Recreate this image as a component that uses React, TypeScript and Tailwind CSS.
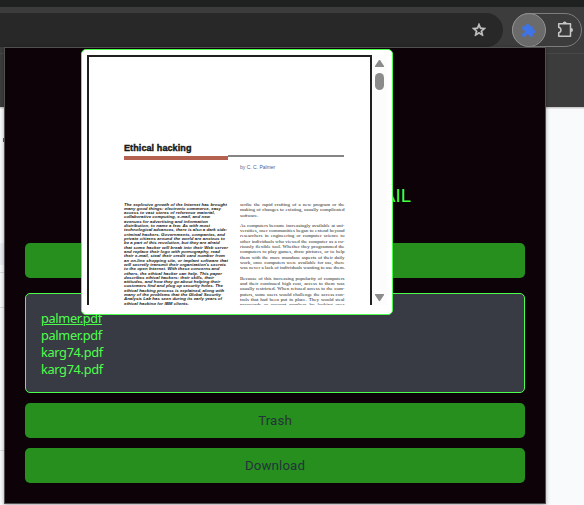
import React from "react";

const abstractLines: [string, number][] = [
  ["The explosive growth of the Internet has brought", 103],
  ["many good things: electronic commerce, easy", 97],
  ["access to vast stores of reference material,", 91],
  ["collaborative computing, e-mail, and new", 86],
  ["avenues for advertising and information", 84],
  ["distribution, to name a few. As with most", 86],
  ["technological advances, there is also a dark side:", 103],
  ["criminal hackers. Governments, companies, and", 101],
  ["private citizens around the world are anxious to", 101],
  ["be a part of this revolution, but they are afraid", 95],
  ["that some hacker will break into their Web server", 104],
  ["and replace their logo with pornography, read", 96],
  ["their e-mail, steal their credit card number from", 101],
  ["an on-line shopping site, or implant software that", 104],
  ["will secretly transmit their organization's secrets", 102],
  ["to the open Internet. With these concerns and", 94],
  ["others, the ethical hacker can help. This paper", 98],
  ["describes ethical hackers: their skills, their", 90],
  ["attitudes, and how they go about helping their", 95],
  ["customers find and plug up security holes. The", 99],
  ["ethical hacking process is explained, along with", 100],
  ["many of the problems that the Global Security", 97],
  ["Analysis Lab has seen during its early years of", 98],
  ["ethical hacking for IBM clients.", 65],
];

const bodyParagraphs: string[][] = [
  [
    "scribe the rapid crafting of a new program or the",
    "making of changes to existing, usually complicated",
    "software.",
  ],
  [
    "As computers became increasingly available at uni-",
    "versities, user communities began to extend beyond",
    "researchers in engineering or computer science to",
    "other individuals who viewed the computer as a cu-",
    "riously flexible tool. Whether they programmed the",
    "computers to play games, draw pictures, or to help",
    "them with the more mundane aspects of their daily",
    "work, once computers were available for use, there",
    "was never a lack of individuals wanting to use them.",
  ],
  [
    "Because of this increasing popularity of computers",
    "and their continued high cost, access to them was",
    "usually restricted. When refused access to the com-",
    "puters, some users would challenge the access con-",
    "trols that had been put in place. They would steal",
    "passwords or account numbers by looking over",
  ],
];

const files = ["palmer.pdf", "palmer.pdf", "karg74.pdf", "karg74.pdf"];

function Toolbar() {
  return (
    <header className="h-[107px] bg-[#3c3c3c]">
      <div className="h-[7px] bg-[#1f2120]" />
      <div className="flex h-[47px] items-start border-b border-[#484848] pt-[6px]">
        <div className="flex h-[34px] w-[503px] items-center justify-end rounded-r-full bg-[#282828] pr-4">
          <svg width="16" height="16" viewBox="0 0 24 24" fill="#c7c7c7">
            <path d="M22 9.24l-7.19-.62L12 2 9.19 8.63 2 9.24l5.46 4.73L5.82 21 12 17.27 18.18 21l-1.63-7.03L22 9.24zM12 15.4l-3.76 2.27 1-4.28-3.32-2.88 4.38-.38L12 6.1l1.71 4.04 4.38.38-3.32 2.88 1 4.28L12 15.4z" stroke="#c7c7c7" strokeWidth="1" />
          </svg>
        </div>
        <div className="ml-[9px] flex h-[34px] w-[70px] items-center rounded-full border border-[#7d7d7d]">
          <div className="-ml-px flex size-[34px] items-center justify-center rounded-full border border-[#929292] bg-[#6b6b6b]">
            <svg className="mr-px mt-px" width="15" height="15" viewBox="0 0 24 24" fill="#3f73e8">
              <path d="M20.5 11H19V7c0-1.100-.9-2-2-2h-4V3.500a2.500 2.500 0 0 0-5 0V5H4c-1.100 0-2 .9-2 2v3.800h1.500a2.700 2.700 0 0 1 0 5.400H2V20c0 1.100.9 2 2 2h3.800v-1.500a2.700 2.700 0 0 1 5.400 0V22H17c1.100 0 2-.9 2-2v-4h1.500a2.500 2.500 0 0 0 0-5z" />
            </svg>
          </div>
          <svg className="ml-[11px] mt-[-2px]" width="17" height="17" viewBox="0 0 17 17" fill="none">
            <path d="M1.700 2.700H13.500V15.300H1.700V11.700C4.700 11 4.700 7 1.700 6.300Z" stroke="#c7c7c7" strokeWidth="1.500" strokeLinejoin="round" />
            <path d="M5.700 2.500a2 2 0 0 1 4 0zM14 7a2 2 0 0 1 0 4z" fill="#c7c7c7" />
          </svg>
        </div>
      </div>
    </header>
  );
}

function PaperPreview() {
  return (
    <div className="absolute left-[76px] top-px z-10 h-[266px] w-[312px] rounded-[5px] border border-[#4dff4d] bg-white p-[5px] font-['Liberation_Sans',sans-serif]">
      <div className="flex h-[250px] overflow-hidden">
        <div className="h-[300px] w-[285px] shrink-0 border-2 border-[#202020] pl-[35px] text-[#202020]">
          <h1 className="mt-[83.500px] w-[69px] whitespace-nowrap text-[9px] font-bold leading-[14px] tracking-[.1px] [-webkit-text-stroke:.4px_#111]">
            Ethical hacking
          </h1>
          <div className="mt-[.500px] flex w-[220px] items-start">
            <div className="mt-px h-[4px] w-[104px] bg-[#b46150]" />
            <div className="h-[2px] flex-1 bg-[#858585]" />
          </div>
          <div className="mt-[3px] ml-[116px] h-[8px] text-[5px] leading-[8px] text-[#68687a]">
            by <span className="text-[#4d5d9c]">C. C. Palmer</span>
          </div>
          <div className="mt-[31px] flex gap-[12px]">
            <div className="mt-[.500px] w-[104px] shrink-0 text-[4.400px] font-bold italic leading-[4.310px]">
              {abstractLines.map(([text, width], i) => (
                <div key={i} className="whitespace-nowrap [text-align-last:justify]" style={{ width }}>
                  {text}
                </div>
              ))}
            </div>
            <div className="w-[104.500px] shrink-0 font-['Liberation_Serif',serif] text-[5px] leading-[5.350px] text-[#242424]">
              {bodyParagraphs.map((lines, p) => (
                <div key={p} className="mb-[4.700px]">
                  {lines.map((line) => (
                    <div key={line} className={line === "software." ? "" : "whitespace-nowrap [text-align-last:justify]"}>
                      {line}
                    </div>
                  ))}
                </div>
              ))}
            </div>
          </div>
        </div>
        <div className="flex w-[15px] flex-col items-center bg-[#fcfcfc] pb-[4px] pt-[5px]">
          <svg width="9" height="7" viewBox="0 0 9 7" fill="#8b8b8b">
            <path d="M4 0h1l4 6v1H0V6z" />
          </svg>
          <div className="mt-[6px] h-[17px] w-[9px] rounded-full bg-[#8b8b8b]" />
          <svg className="mt-auto" width="9" height="7" viewBox="0 0 9 7" fill="#8b8b8b">
            <path d="M0 0h9v1L5 7H4L0 1z" />
          </svg>
        </div>
      </div>
    </div>
  );
}

function ExtensionPopup() {
  return (
    <main className="absolute left-[4px] top-[47px] h-[457px] w-[542px] border border-[#505050] bg-[#0d0208] shadow-[0_1px_4px_rgba(0,0,0,.35)]">
      <PaperPreview />
      <div className="flex flex-col px-[20px] pt-[136px] font-['Noto_Sans',sans-serif]">
        <h2 className="h-[24px] pr-[114px] text-right text-[19px] leading-[24px] text-[#41ff41] font-['Roboto',sans-serif]">
          THUMBNAIL
        </h2>
        <button className="mt-[35px] h-[35px] rounded-[5px] bg-[#268f1e]" />
        <ul className="mt-[15px] h-[100px] rounded-[5px] border border-[#4dff4d] bg-[#393b44] px-[15px] pt-[15.500px] text-[12.800px] leading-[17px] tracking-[-.35px] text-[#4dff4d]">
          {files.map((name, i) => (
            <li key={i} className={i === 0 ? "underline" : ""}>{name}</li>
          ))}
        </ul>
        <button className="mt-[10px] h-[35px] rounded-[5px] bg-[#268f1e] font-['Roboto',sans-serif] text-[13.333px] tracking-[.1px] text-[#25333a]">Trash</button>
        <button className="mt-[10px] h-[35px] rounded-[5px] bg-[#268f1e] font-['Roboto',sans-serif] text-[13.333px] tracking-[.1px] text-[#25333a]">Download</button>
      </div>
    </main>
  );
}

export default function App() {
  return (
    <div className="relative h-[505px] w-[584px] overflow-hidden bg-[#f9fafc]">
      <Toolbar />
      <div className="h-[2px] bg-gradient-to-b from-[#c0c0c0] to-[#f0f0f0]" />
      <div className="flex h-[396px] w-[4px] flex-col">
        <div className="ml-[3px] mt-[29px] h-[4px] w-px bg-[#68508c]" />
        <div className="mt-[101px] h-[22px] bg-[#eceef4]" />
        <div className="mt-[7px] h-px bg-[#dcdde2]" />
        <div className="mt-[34px] h-px bg-[#dcdde2]" />
        <div className="mt-[142px] h-px bg-[#dcdde2]" />
      </div>
      <ExtensionPopup />
    </div>
  );
}
